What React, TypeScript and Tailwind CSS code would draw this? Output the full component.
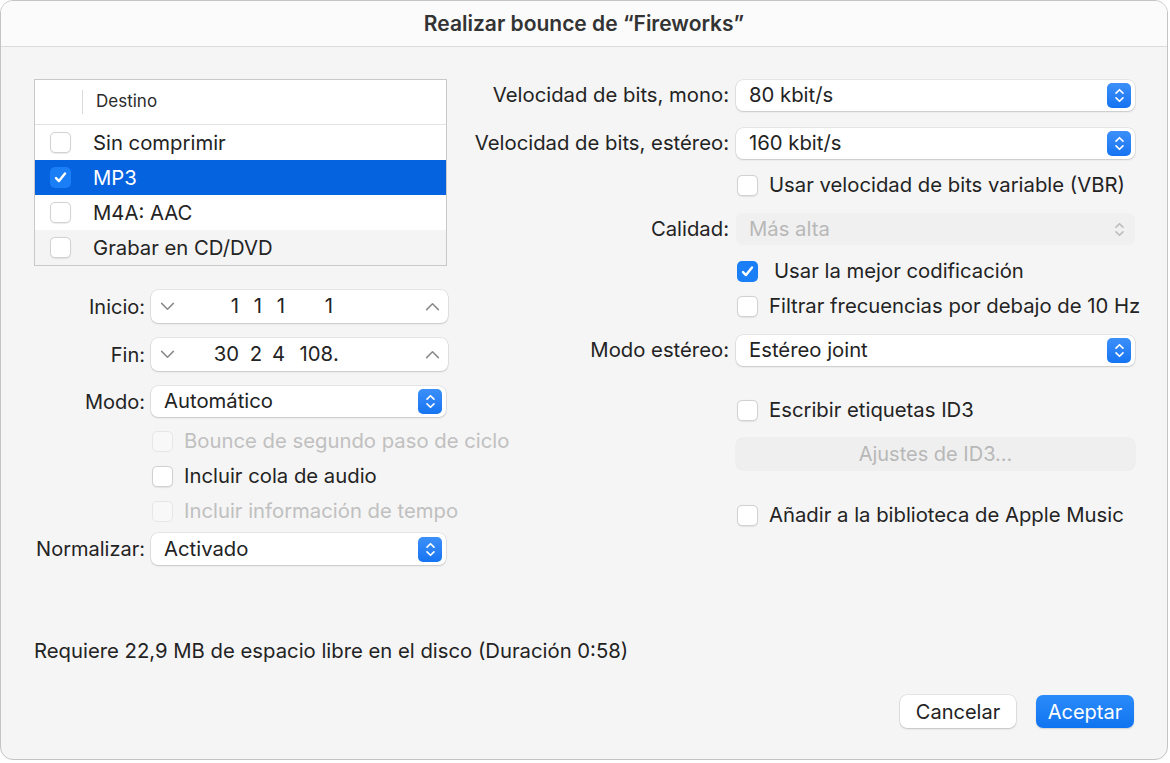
import React from "react";

const font = "font-['Inter','Liberation_Sans',sans-serif]";

function CheckMark() {
  return (
    <svg viewBox="0 0 16 16" className="h-[15px] w-[15px]" fill="none">
      <path
        d="M3.2 8.6 L6.4 11.8 L12.8 3.8"
        stroke="white"
        strokeWidth="2.6"
        strokeLinecap="round"
        strokeLinejoin="round"
      />
    </svg>
  );
}

function Checkbox({
  checked = false,
  disabled = false,
}: {
  checked?: boolean;
  disabled?: boolean;
}) {
  if (checked) {
    return (
      <span className="flex h-[21px] w-[21px] shrink-0 items-center justify-center rounded-[5px] bg-[#1a7ef6]">
        <CheckMark />
      </span>
    );
  }
  return (
    <span
      className={`h-[21px] w-[21px] shrink-0 rounded-[5px] border ${
        disabled
          ? "border-[#e6e6e6] bg-[#f8f8f8]"
          : "border-[#d2d2d2] bg-white shadow-[0_0.5px_1px_rgba(0,0,0,0.08)]"
      }`}
    />
  );
}

function Chevron({ up = false, color = "#8a8a8a" }: { up?: boolean; color?: string }) {
  return (
    <svg viewBox="0 0 16 10" className="h-[9px] w-[15px]" fill="none">
      <path
        d={up ? "M1.5 8.5 L8 2 L14.5 8.5" : "M1.5 1.5 L8 8 L14.5 1.5"}
        stroke={color}
        strokeWidth="1.7"
        strokeLinecap="round"
        strokeLinejoin="round"
      />
    </svg>
  );
}

function UpDown({ color }: { color: string }) {
  return (
    <svg viewBox="0 0 12 18" className="h-[17px] w-[11px]" fill="none">
      <path
        d="M2.2 6.5 L6 2.7 L9.8 6.5 M2.2 11.5 L6 15.3 L9.8 11.5"
        stroke={color}
        strokeWidth="1.8"
        strokeLinecap="round"
        strokeLinejoin="round"
      />
    </svg>
  );
}

function Popup({
  value,
  disabled = false,
  className = "",
}: {
  value: string;
  disabled?: boolean;
  className?: string;
}) {
  return (
    <div
      className={`flex items-center rounded-[7px] pl-[13px] pr-[4px] ${
        disabled
          ? "bg-[#f0f0f0] text-[#b8b8b8]"
          : "bg-white text-[#232323] shadow-[0_0_0_0.5px_rgba(0,0,0,0.12),0_1px_2px_rgba(0,0,0,0.14)]"
      } ${className}`}
    >
      <span className="flex-1 text-[20.3px]">{value}</span>
      {disabled ? (
        <span className="flex h-[25px] w-[24px] items-center justify-center">
          <UpDown color="#bdbdbd" />
        </span>
      ) : (
        <span className="flex h-[25px] w-[24px] items-center justify-center rounded-[5px] bg-gradient-to-b from-[#3b8ff8] to-[#1574f2]">
          <UpDown color="white" />
        </span>
      )}
    </div>
  );
}

function Stepper({ segments, dot }: { segments: string[]; dot?: boolean }) {
  const widths = ["w-[49px]", "w-[23px]", "w-[23px]", "w-[48px]"];
  return (
    <div className="flex h-[33px] w-[297px] items-center rounded-[7px] bg-white pl-[9px] pr-[8px] text-[20.3px] text-[#232323] shadow-[0_0_0_0.5px_rgba(0,0,0,0.12),0_1px_2px_rgba(0,0,0,0.14)]">
      <Chevron />
      <div className="ml-[15px] flex flex-1 items-center">
        {segments.map((s, i) => (
          <span key={i} className={`${widths[i]} text-right`}>
            {s}
          </span>
        ))}
        {dot ? <span>.</span> : null}
      </div>
      <Chevron up />
    </div>
  );
}

function CheckRow({
  label,
  checked,
  disabled,
  gap = "gap-[11px]",
}: {
  label: string;
  checked?: boolean;
  disabled?: boolean;
  gap?: string;
}) {
  return (
    <div className={`flex h-[35px] items-center ${gap}`}>
      <Checkbox checked={checked} disabled={disabled} />
      <span
        className={`whitespace-nowrap text-[20.3px] ${
          disabled ? "text-[#c0c0c0]" : "text-[#232323]"
        }`}
      >
        {label}
      </span>
    </div>
  );
}

function LeftLabel({ children }: { children: React.ReactNode }) {
  return (
    <span className="w-[111px] shrink-0 whitespace-nowrap text-right text-[20px] text-[#232323]">
      {children}
    </span>
  );
}

function RightLabel({ children }: { children: React.ReactNode }) {
  return (
    <span className="w-[258px] shrink-0 whitespace-nowrap text-right text-[20.3px] text-[#232323]">
      {children}
    </span>
  );
}

const destinations = [
  { label: "Sin comprimir", selected: false, bg: "bg-white" },
  { label: "MP3", selected: true, bg: "bg-[#0563e0]" },
  { label: "M4A: AAC", selected: false, bg: "bg-white" },
  { label: "Grabar en CD/DVD", selected: false, bg: "bg-[#f4f4f4]" },
];

export default function App() {
  return (
    <div className={`h-[763px] w-[1170px] bg-white ${font}`}>
      <div className="flex h-[760px] w-[1168px] flex-col overflow-hidden rounded-[13px] border border-[#c4c4c4] bg-[#f5f5f5]">
        {/* title bar */}
        <div className="flex h-[46px] shrink-0 items-center justify-center border-b border-[#dcdcdc] bg-[#fbfbfb]">
          <span className="text-[21px] font-semibold text-[#333333]">
            Realizar bounce de “Fireworks”
          </span>
        </div>

        <div className="flex flex-1 flex-col px-[33px]">
          <div className="flex pt-[32px]">
            {/* left column */}
            <div className="flex w-[414px] shrink-0 flex-col">
              <div className="h-[187px] w-[413px] border border-[#c9c9c9] bg-white">
                <div className="flex h-[45px] items-center border-b border-[#e3e3e3]">
                  <span className="ml-[47px] h-[24px] w-px bg-[#dadada]" />
                  <span className="ml-[13px] text-[17px] text-[#2b2b2b]">Destino</span>
                </div>
                {destinations.map((d) => (
                  <div
                    key={d.label}
                    className={`flex h-[35px] items-center gap-[22px] pl-[15px] ${d.bg}`}
                  >
                    <Checkbox checked={d.selected} />
                    <span
                      className={`pt-[1px] text-[20.3px] ${d.selected ? "text-white" : "text-[#232323]"}`}
                    >
                      {d.label}
                    </span>
                  </div>
                ))}
              </div>

              <div className="mt-[24px] flex items-center gap-[6px]">
                <LeftLabel>Inicio:</LeftLabel>
                <Stepper segments={["1", "1", "1", "1"]} />
              </div>
              <div className="mt-[15px] flex items-center gap-[6px]">
                <LeftLabel>Fin:</LeftLabel>
                <Stepper segments={["30", "2", "4", "108"]} dot />
              </div>
              <div className="mt-[15px] flex items-center gap-[6px]">
                <LeftLabel>Modo:</LeftLabel>
                <Popup value="Automático" className="h-[31px] w-[295px]" />
              </div>
              <div className="mt-[7px] flex flex-col pl-[118px]">
                <CheckRow label="Bounce de segundo paso de ciclo" disabled />
                <CheckRow label="Incluir cola de audio" />
                <CheckRow label="Incluir información de tempo" disabled />
              </div>
              <div className="mt-[4px] flex items-center gap-[6px]">
                <LeftLabel>Normalizar:</LeftLabel>
                <Popup value="Activado" className="h-[32px] w-[295px]" />
              </div>
            </div>

            {/* right column */}
            <div className="ml-[23px] flex flex-1 flex-col pt-[1px]">
              <div className="flex items-center gap-[7px]">
                <RightLabel>Velocidad de bits, mono:</RightLabel>
                <Popup value="80 kbit/s" className="h-[31px] w-[399px]" />
              </div>
              <div className="mt-[17px] flex items-center gap-[7px]">
                <RightLabel>Velocidad de bits, estéreo:</RightLabel>
                <Popup value="160 kbit/s" className="h-[31px] w-[399px]" />
              </div>
              <div className="mt-[9px] pl-[266px]">
                <CheckRow label="Usar velocidad de bits variable (VBR)" />
              </div>
              <div className="mt-[10px] flex items-center gap-[7px]">
                <RightLabel>Calidad:</RightLabel>
                <Popup value="Más alta" disabled className="h-[32px] w-[399px]" />
              </div>
              <div className="mt-[9px] flex flex-col pl-[266px]">
                <CheckRow label="Usar la mejor codificación" checked gap="gap-[16px]" />
                <CheckRow label="Filtrar frecuencias por debajo de 10 Hz" />
              </div>
              <div className="mt-[11px] flex items-center gap-[7px]">
                <RightLabel>Modo estéreo:</RightLabel>
                <Popup value="Estéreo joint" className="h-[31px] w-[399px]" />
              </div>
              <div className="mt-[27px] pl-[266px]">
                <CheckRow label="Escribir etiquetas ID3" />
              </div>
              <div className="mt-[10px] pl-[265px]">
                <div className="flex h-[32px] w-[399px] items-center justify-center rounded-[7px] bg-[#efefef] text-[20px] text-[#b8b8b8] shadow-[0_0_0_0.5px_rgba(0,0,0,0.05)]">
                  Ajustes de ID3…
                </div>
              </div>
              <div className="mt-[28px] pl-[266px]">
                <CheckRow label="Añadir a la biblioteca de Apple Music" />
              </div>
            </div>
          </div>

          <div className="mt-auto flex flex-col">
            <p className="text-[20.3px] text-[#232323]">
              Requiere 22,9 MB de espacio libre en el disco (Duración 0:58)
            </p>
            <div className="mb-[31px] mt-[29px] flex justify-end gap-[20px]">
              <button className="h-[33px] w-[116px] rounded-[7px] bg-white text-[20px] text-[#232323] shadow-[0_0_0_0.5px_rgba(0,0,0,0.12),0_1px_2px_rgba(0,0,0,0.16)]">
                Cancelar
              </button>
              <button className="h-[33px] w-[98px] rounded-[7px] bg-gradient-to-b from-[#2a8bfa] to-[#0f74f0] text-[20px] text-white shadow-[0_1px_1.5px_rgba(0,0,0,0.15)]">
                Aceptar
              </button>
            </div>
          </div>
        </div>
      </div>
    </div>
  );
}
